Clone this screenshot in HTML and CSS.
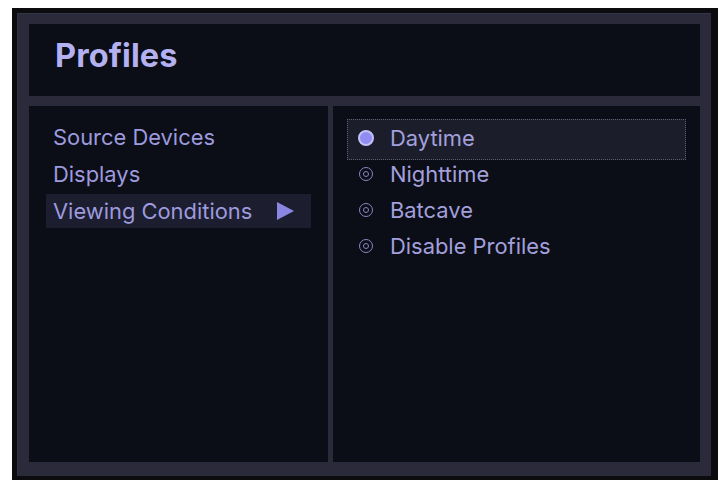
FILE: index.html
```html
<!DOCTYPE html>
<html>
<head>
<meta charset="utf-8">
<link rel="stylesheet" href="styles.css">
</head>
<body>
<div class="frame">
  <div class="bezel">
    <div class="header"><h1 class="title">Profiles</h1></div>
    <div class="body">
      <div class="panel left">
        <div class="menu-item">Source Devices</div>
        <div class="menu-item">Displays</div>
        <div class="menu-item active"><span>Viewing Conditions</span><span class="arrow"></span></div>
      </div>
      <div class="panel right">
        <div class="option selected"><span class="radio on"></span><span>Daytime</span></div>
        <div class="option"><span class="radio"></span><span>Nighttime</span></div>
        <div class="option"><span class="radio"></span><span>Batcave</span></div>
        <div class="option"><span class="radio"></span><span>Disable Profiles</span></div>
      </div>
    </div>
  </div>
</div>
</body>
</html>
```

FILE: styles.css
```css
html, body { margin: 0; padding: 0; background: #ffffff; }
body { font-family: "Inter", "Lato", sans-serif; }
.frame {
  margin: 8px 0 0 12px;
  width: 706px;
  height: 472px;
  box-sizing: border-box;
  background: #0c0c0f;
  padding: 5px 7px 4px 5px;
}
.bezel {
  height: 100%;
  box-sizing: border-box;
  background: #2a2a3a;
  padding: 11px 11px 14px 12px;
  display: flex;
  flex-direction: column;
  gap: 10px;
  box-shadow: inset 0 1px 0 #34344a, inset 1px 0 0 #303044;
}
.header {
  height: 72px;
  background: #0b0d17;
  display: flex;
  align-items: center;
  padding-left: 26px;
  box-sizing: border-box;
}
.title {
  margin: 0 0 9px 0;
  font-size: 32.5px;
  font-weight: 700;
  color: #b4b1f0;
  letter-spacing: 0.1px;
}
.body {
  flex: 1;
  display: flex;
  gap: 5px;
}
.panel {
  background: #0b0d17;
  box-sizing: border-box;
}
.left {
  width: 299px;
  padding: 14px 17px 0 17px;
  display: flex;
  flex-direction: column;
  gap: 3px;
}
.right {
  flex: 1;
  padding: 14px 14px 0 14px;
  display: flex;
  flex-direction: column;
}
.menu-item {
  height: 34px;
  display: flex;
  align-items: center;
  justify-content: space-between;
  padding: 0 17px 0 7px;
  font-size: 21.9px;
  color: #9d9ade;
}
.menu-item.active { background: #1c1d2f; }
.arrow {
  width: 0; height: 0;
  border-top: 9px solid transparent;
  border-bottom: 9px solid transparent;
  border-left: 17px solid #8a86e2;
}
.option {
  position: relative;
  height: 36px;
  display: flex;
  align-items: center;
  padding-left: 11px;
  gap: 16px;
  font-size: 21.9px;
  color: #a3a0dc;
}
.option.selected::before {
  content: "";
  position: absolute;
  left: 0; right: 0; top: -1px; bottom: -4px;
  background: #1c1d2b;
  border: 1px dotted #5e5e72;
  z-index: 0;
}
.option > span { position: relative; z-index: 1; }
.radio {
  width: 14px; height: 14px;
  margin: 0 1px;
  box-sizing: border-box;
  border-radius: 50%;
  border: 1.5px solid #8986bf;
  display: flex;
  align-items: center;
  justify-content: center;
}
.radio::after {
  content: "";
  width: 6px; height: 6px;
  box-sizing: border-box;
  border-radius: 50%;
  border: 1.5px solid #8986bf;
}
.radio.on {
  width: 16px; height: 16px;
  margin: 0;
  border: 2px solid #c4c2f4;
  background: #8f8cf2;
}
.radio.on::after { display: none; }
```
